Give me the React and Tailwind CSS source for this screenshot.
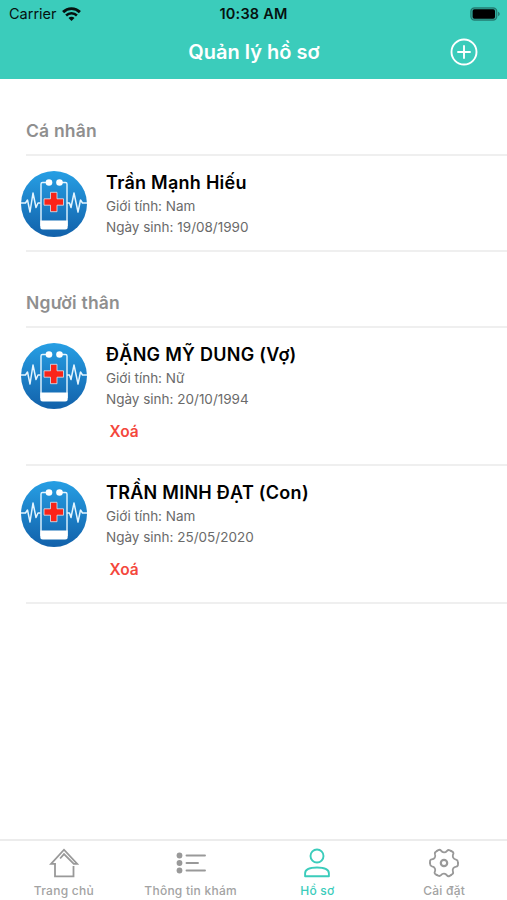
const profiles = [
  { name: 'Trần Mạnh Hiếu', gender: 'Nam', birthday: '19/08/1990' },
];

const relatives = [
  { name: 'ĐẶNG MỸ DUNG (Vợ)', gender: 'Nữ', birthday: '20/10/1994' },
  { name: 'TRẦN MINH ĐẠT (Con)', gender: 'Nam', birthday: '25/05/2020' },
];

const WifiIcon = () => (
  <svg width="19" height="14" viewBox="0 0 19 14" fill="none" stroke="#06110f">
    <path d="M1.1 5.1a12 12 0 0 1 16.8 0" strokeWidth="2.9" />
    <path d="M4.1 8.5a7.6 7.6 0 0 1 10.8 0" strokeWidth="2.5" />
    <path d="M9.5 13.9 6.5 10.9a4.2 4.2 0 0 1 6 0Z" fill="#06110f" stroke="none" />
  </svg>
);

const BatteryIcon = () => (
  <svg width="31" height="14" viewBox="0 0 31 14">
    <rect x="0.8" y="0.8" width="26" height="12.4" rx="3.6" fill="#000" fillOpacity="0.15" stroke="#000" strokeOpacity="0.35" strokeWidth="1.2" />
    <rect x="2.6" y="2.2" width="22.4" height="9.6" rx="1.8" fill="#000" />
    <path d="M28.2 4.8c1.9.7 1.9 3.7 0 4.4Z" fill="#000" fillOpacity="0.45" />
  </svg>
);

const Avatar = () => (
  <svg className="shrink-0" width="66" height="66" viewBox="0 0 66 66" fill="none">
    <defs>
      <linearGradient id="avatar-bg" x1="0" y1="0" x2="0" y2="1">
        <stop offset="0" stopColor="#279fe4" />
        <stop offset="1" stopColor="#1261aa" />
      </linearGradient>
    </defs>
    <circle cx="33" cy="33" r="33" fill="url(#avatar-bg)" />
    <path
      d="M0 32h4.5l2-3L9 41l3-19 3 14.500 2-4.500h2.500M66 32h-4.500l-2-3L57 41l-4-19-3 14.500-1.500-4.500h-2.500"
      stroke="#e4f5ff"
      strokeWidth="1.5"
      strokeLinejoin="round"
    />
    <path d="M28 11.5h-6.500a1.500 1.500 0 0 0-1.500 1.500v42M38 11.500h6.500a1.500 1.500 0 0 1 1.500 1.500v42" stroke="#e4f5ff" strokeWidth="1.4" />
    <circle cx="28" cy="11.5" r="3.3" fill="#fff" />
    <circle cx="38.5" cy="11.5" r="3.3" fill="#fff" />
    <path d="M19.3 49.5h27.400V56a2.500 2.500 0 0 1-2.500 2.500H21.800a2.500 2.500 0 0 1-2.500-2.500Z" fill="#fff" />
    <path d="M29.5 21.300h6.500v6.500h6.500v6.400H36v6.500h-6.500v-6.500H23v-6.400h6.500Z" fill="#fa2418" stroke="#d9e9f5" strokeWidth="0.8" />
  </svg>
);

const HomeIcon = () => (
  <svg width="30" height="30" viewBox="0 0 30 30" fill="none" stroke="#999" strokeWidth="1.8">
    <path d="M6 15v13.300h18.500V18" />
    <path d="M6.500 15.800H2L15 1.700l13.200 14.100h-3.400L15 6.100l-3.900 4.400" />
  </svg>
);

const ListIcon = () => (
  <svg width="30" height="30" viewBox="0 0 30 30" stroke="#999" strokeWidth="1.9" strokeLinecap="round">
    <g fill="#999" stroke="none">
      <circle cx="3.5" cy="7.500" r="2.900" />
      <circle cx="3.5" cy="15" r="2.900" />
      <circle cx="3.5" cy="22.500" r="2.900" />
    </g>
    <path d="M10.5 7.500H29M10.500 15h11.500M10.500 22.500H29" />
  </svg>
);

const UserIcon = () => (
  <svg width="30" height="30" viewBox="0 0 30 30" fill="none" stroke="#3bccbb" strokeWidth="1.9">
    <circle cx="15" cy="8" r="6.500" />
    <path d="M3.100 28.300v-3c0-3.800 5-5.800 11.900-5.800s11.900 2 11.900 5.800v3Z" strokeLinejoin="round" />
  </svg>
);

// one tooth-to-tooth segment, turned six times round the hub
const GearIcon = () => (
  <svg width="30" height="30" viewBox="0 0 30 30" fill="none" stroke="#999" strokeWidth="1.8" strokeLinecap="round">
    {[0, 60, 120, 180, 240, 300].map((angle) => (
      <path
        key={angle}
        d="M29 15v1.500Q29 18.400 27.200 18.600C24.600 18.900 23 21 24 23.700Q24.600 25.500 22.900 26.400L22 27.120"
        transform={`rotate(${angle} 15 15)`}
      />
    ))}
    <circle cx="15" cy="15" r="3.200" strokeWidth="2.200" />
  </svg>
);

const ProfileRow = ({ profile, removable }) => (
  <div
    className={`ml-[26px] flex border-b-2 border-[#efefef] ${removable ? 'h-[138px]' : 'h-24'}`}
  >
    <div className="-ml-[5.5px] pt-[14.5px]">
      <Avatar />
    </div>
    <div className="ml-[19.5px] pt-[15px]">
      <h3 className="text-[18px] leading-6 font-semibold tracking-[0.27px] whitespace-nowrap text-black">
        {profile.name}
      </h3>
      <p className="mt-[1px] text-[13.5px] leading-[21px] text-[#6a6a6a]">
        Giới tính: {profile.gender}
      </p>
      <p className="text-[13.5px] leading-[21px] text-[#6a6a6a]">
        Ngày sinh: {profile.birthday}
      </p>
      {removable && (
        <button className="mt-3 ml-[3.5px] block text-[15.5px] leading-5 font-semibold text-[#f4473c]">
          Xoá
        </button>
      )}
    </div>
  </div>
);

const SectionTitle = ({ children }) => (
  <h2 className="ml-[26px] flex h-[76px] items-end border-b-2 border-[#efefef] pb-[11px] text-[17.5px] leading-6 font-semibold tracking-[0.2px] text-[#8f8f8f]">
    {children}
  </h2>
);

const tabs = [
  { label: 'Trang chủ', icon: HomeIcon },
  { label: 'Thông tin khám', icon: ListIcon },
  { label: 'Hồ sơ', icon: UserIcon, active: true },
  { label: 'Cài đặt', icon: GearIcon },
];

export default function App() {
  return (
    <div className="flex h-[900px] w-full flex-col overflow-hidden bg-white font-['Inter',sans-serif]">
      {/* Header */}
      <header className="h-[79px] shrink-0 bg-[#3bccbb]">
        <div className="grid h-[27px] grid-cols-3 items-center">
          <div className="flex items-center gap-[5px] pl-[9px] text-[14.5px] text-[#06110f]">
            Carrier
            <WifiIcon />
          </div>
          <div className="text-center text-[14.5px] font-semibold tracking-[0.2px] whitespace-nowrap text-[#06110f]">
            10:38 AM
          </div>
          <div className="flex justify-end pr-[6px]">
            <BatteryIcon />
          </div>
        </div>
        <div className="grid h-[50px] grid-cols-[1fr_auto_1fr] items-center">
          <h1 className="col-start-2 pl-px text-[20px] font-semibold text-white">
            Quản lý hồ sơ
          </h1>
          <button className="mr-[29px] justify-self-end">
            <svg width="28" height="28" viewBox="0 0 28 28" fill="none" stroke="#fff" strokeWidth="1.9" strokeLinecap="round">
              <circle cx="14" cy="14" r="12.500" />
              <path d="M14 8v12M8 14h12" />
            </svg>
          </button>
        </div>
      </header>

      {/* Profiles */}
      <main className="flex-1 pt-px">
        <SectionTitle>Cá nhân</SectionTitle>
        {profiles.map((profile) => (
          <ProfileRow key={profile.name} profile={profile} />
        ))}
        <SectionTitle>Người thân</SectionTitle>
        {relatives.map((profile) => (
          <ProfileRow key={profile.name} profile={profile} removable />
        ))}
      </main>

      {/* Tab bar */}
      <nav className="grid h-[61px] shrink-0 grid-cols-4 border-t-2 border-[#ececec]">
        {tabs.map(({ label, icon: Icon, active }) => (
          <button
            key={label}
            className={`flex flex-col items-center pt-[7px] pl-px text-[12px] leading-4 font-medium tracking-[0.25px] whitespace-nowrap ${active ? 'text-[#3bccbb]' : 'text-[#a3a3a3]'}`}
          >
            <Icon />
            <span className="mt-[5px]">{label}</span>
          </button>
        ))}
      </nav>
    </div>
  );
}
